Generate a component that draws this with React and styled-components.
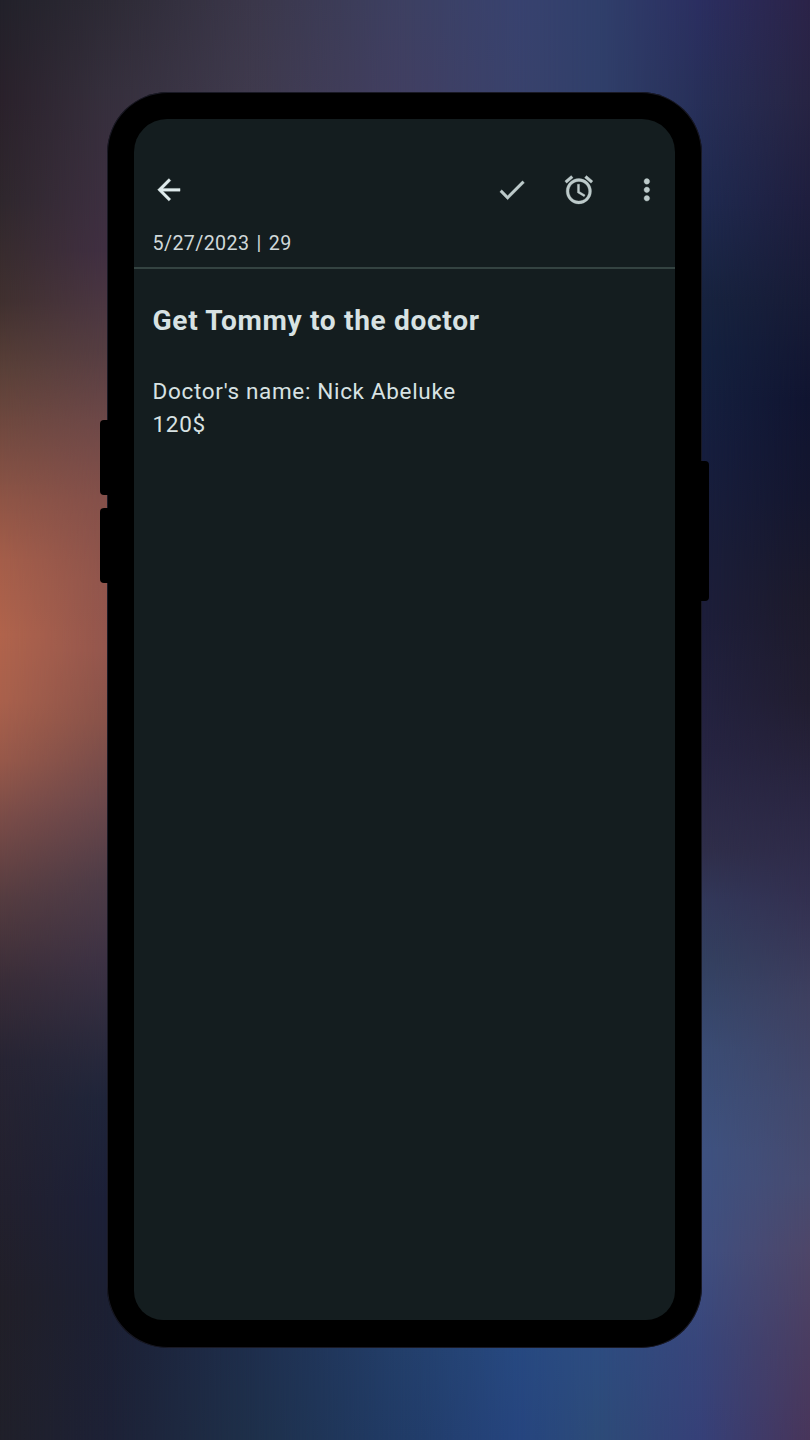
import React from "react";
import styled, { createGlobalStyle } from "styled-components";
import { MdArrowBack, MdCheck, MdAccessAlarm, MdMoreVert } from "react-icons/md";

const GlobalStyle = createGlobalStyle`
  *, *::before, *::after { box-sizing: border-box; }
  body { margin: 0; background: #1c2033; }
`;

/* The wallpaper blends vertical gradients, each one fading in from the previous column. */
const WALLPAPER = [
  [0, 0, "#22212a 0, #2a212b 100px, #2f272d 200px, #40302f 300px, #5a4038 370px, #7a4d42 450px, #8f5546 500px, #a55e4a 560px, #b1644c 635px, #aa614c 700px, #98594a 760px, #7a4c48 820px, #553c40 900px, #3a2d38 980px, #272433 1060px, #22202e 1200px, #211f28 1300px, #20202a 1440px"],
  [0, 107, "#2d2a35 0, #352f3c 90px, #402f42 250px, #553d42 350px, #6d4848 420px, #84504a 500px, #90554c 580px, #93564d 650px, #875249 720px, #6c484b 800px, #4e3c47 880px, #3d3244 960px, #2b2a3d 1040px, #1f253a 1100px, #1c2038 1200px, #1c2033 1300px, #1d2136 1440px"],
  [107, 250, "#3b374a 0, #3f3a4d 95px, #1e2e4c 1345px, #1e304a 1440px"],
  [250, 405, "#3d4062 0, #413f62 95px, #233f6b 1345px, #213c68 1440px"],
  [405, 520, "#38426f 0, #39426c 95px, #274981 1345px, #26457f 1440px"],
  [520, 600, "#303f6b 0, #303f6a 95px, #2d4c80 1345px, #2d4b78 1440px"],
  [600, 702, "#2b2e60 0, #272f58 100px, #1f2a50 200px, #17233f 300px, #14213f 350px, #161e3e 450px, #1a1e3a 550px, #1d1e3a 620px, #262442 750px, #2f2e4a 850px, #32385a 900px, #334060 960px, #3a4c74 1050px, #3e5280 1150px, #3f4f80 1250px, #38457a 1350px, #364078 1440px"],
  [702, 810, "#2b2348 0, #272443 100px, #1f1e3e 200px, #171b36 300px, #101430 400px, #14162e 500px, #1c1a2b 600px, #211d30 700px, #2a2642 800px, #333050 900px, #3e4060 1000px, #42486c 1100px, #474b70 1180px, #4e4668 1250px, #4a3c60 1350px, #48355a 1440px"],
];

const Stage = styled.main`
  position: relative;
  width: 810px;
  height: 1440px;
  padding: 92px 108px 92px 107px;
  overflow: hidden;
  isolation: isolate;
  font-family: Roboto, sans-serif;
  color: #d8e2e3;
`;

const WallpaperLayer = styled.div`
  position: absolute;
  inset: 0;
  z-index: -1;
  background: linear-gradient(to bottom, ${(p) => p.$colors});
  ${(p) =>
    p.$to > 0 &&
    `mask-image: linear-gradient(to right, transparent ${p.$from}px, #000 ${p.$to}px);`}
`;

const Phone = styled.section`
  position: relative;
  width: 595px;
  height: 1256px;
  padding: 27px;
  border-radius: 61px;
  background: #000;
  box-shadow: inset 0 0 0 1px rgba(38, 38, 56, 0.65);
`;

const SideKey = styled.span`
  position: absolute;
  top: ${(p) => p.$top}px;
  ${(p) => p.$side}: -7px;
  width: 12px;
  height: ${(p) => p.$height}px;
  border-radius: ${(p) => (p.$side === "left" ? "4px 0 0 4px" : "0 4px 4px 0")};
  background: #000;
`;

const Screen = styled.div`
  display: flex;
  flex-direction: column;
  height: 1201px;
  border-radius: 33px 33px 29px 29px;
  overflow: hidden;
  background: #141d1f;
`;

const Toolbar = styled.header`
  display: flex;
  align-items: center;
  justify-content: space-between;
  height: 78px;
  margin-top: 32px;
  padding: 0 11.5px 0 18px;
`;

const Actions = styled.div`
  display: flex;
  gap: 33.7px;
`;

const IconButton = styled.button`
  display: flex;
  padding: 0;
  border: 0;
  background: none;
  color: ${(p) => (p.$strong ? "#dfebec" : "#bdcaca")};

  svg {
    width: 33.7px;
    height: 33.7px;
    stroke-width: 0.25;
  }

  path[fill="none"] {
    stroke: none;
  }
`;

const Meta = styled.div`
  height: 40px;
  padding: 1px 18.5px 0;
  border-bottom: 2px solid #344341;
  color: #d0d8d9;
  font-size: 19.7px;
  line-height: 28px;
  letter-spacing: 0.35px;
  word-spacing: 1.9px;
`;

const Note = styled.article`
  padding: 34px 18.5px 0;
`;

const Title = styled.h1`
  margin: 0 0 36px;
  font-size: 28.1px;
  font-weight: 700;
  line-height: 36px;
  letter-spacing: 0.67px;
  white-space: nowrap;
`;

const Body = styled.p`
  margin: 0;
  font-size: 22.5px;
  line-height: 33px;
  letter-spacing: 0.67px;
`;

export default function App() {
  return (
    <>
      <GlobalStyle />
      <Stage>
        {WALLPAPER.map(([from, to, colors]) => (
          <WallpaperLayer key={to} $from={from} $to={to} $colors={colors} />
        ))}
        <Phone>
          <SideKey $side="left" $top={328} $height={75} />
          <SideKey $side="left" $top={416} $height={75} />
          <SideKey $side="right" $top={369} $height={140} />
          <Screen>
            <Toolbar>
              <IconButton $strong aria-label="Back"><MdArrowBack /></IconButton>
              <Actions>
                <IconButton aria-label="Done"><MdCheck /></IconButton>
                <IconButton aria-label="Reminder"><MdAccessAlarm /></IconButton>
                <IconButton aria-label="More options"><MdMoreVert /></IconButton>
              </Actions>
            </Toolbar>
            <Meta>5/27/2023 | 29</Meta>
            <Note>
              <Title>Get Tommy to the doctor</Title>
              <Body>
                Doctor's name: Nick Abeluke
                <br />
                120$
              </Body>
            </Note>
          </Screen>
        </Phone>
      </Stage>
    </>
  );
}
